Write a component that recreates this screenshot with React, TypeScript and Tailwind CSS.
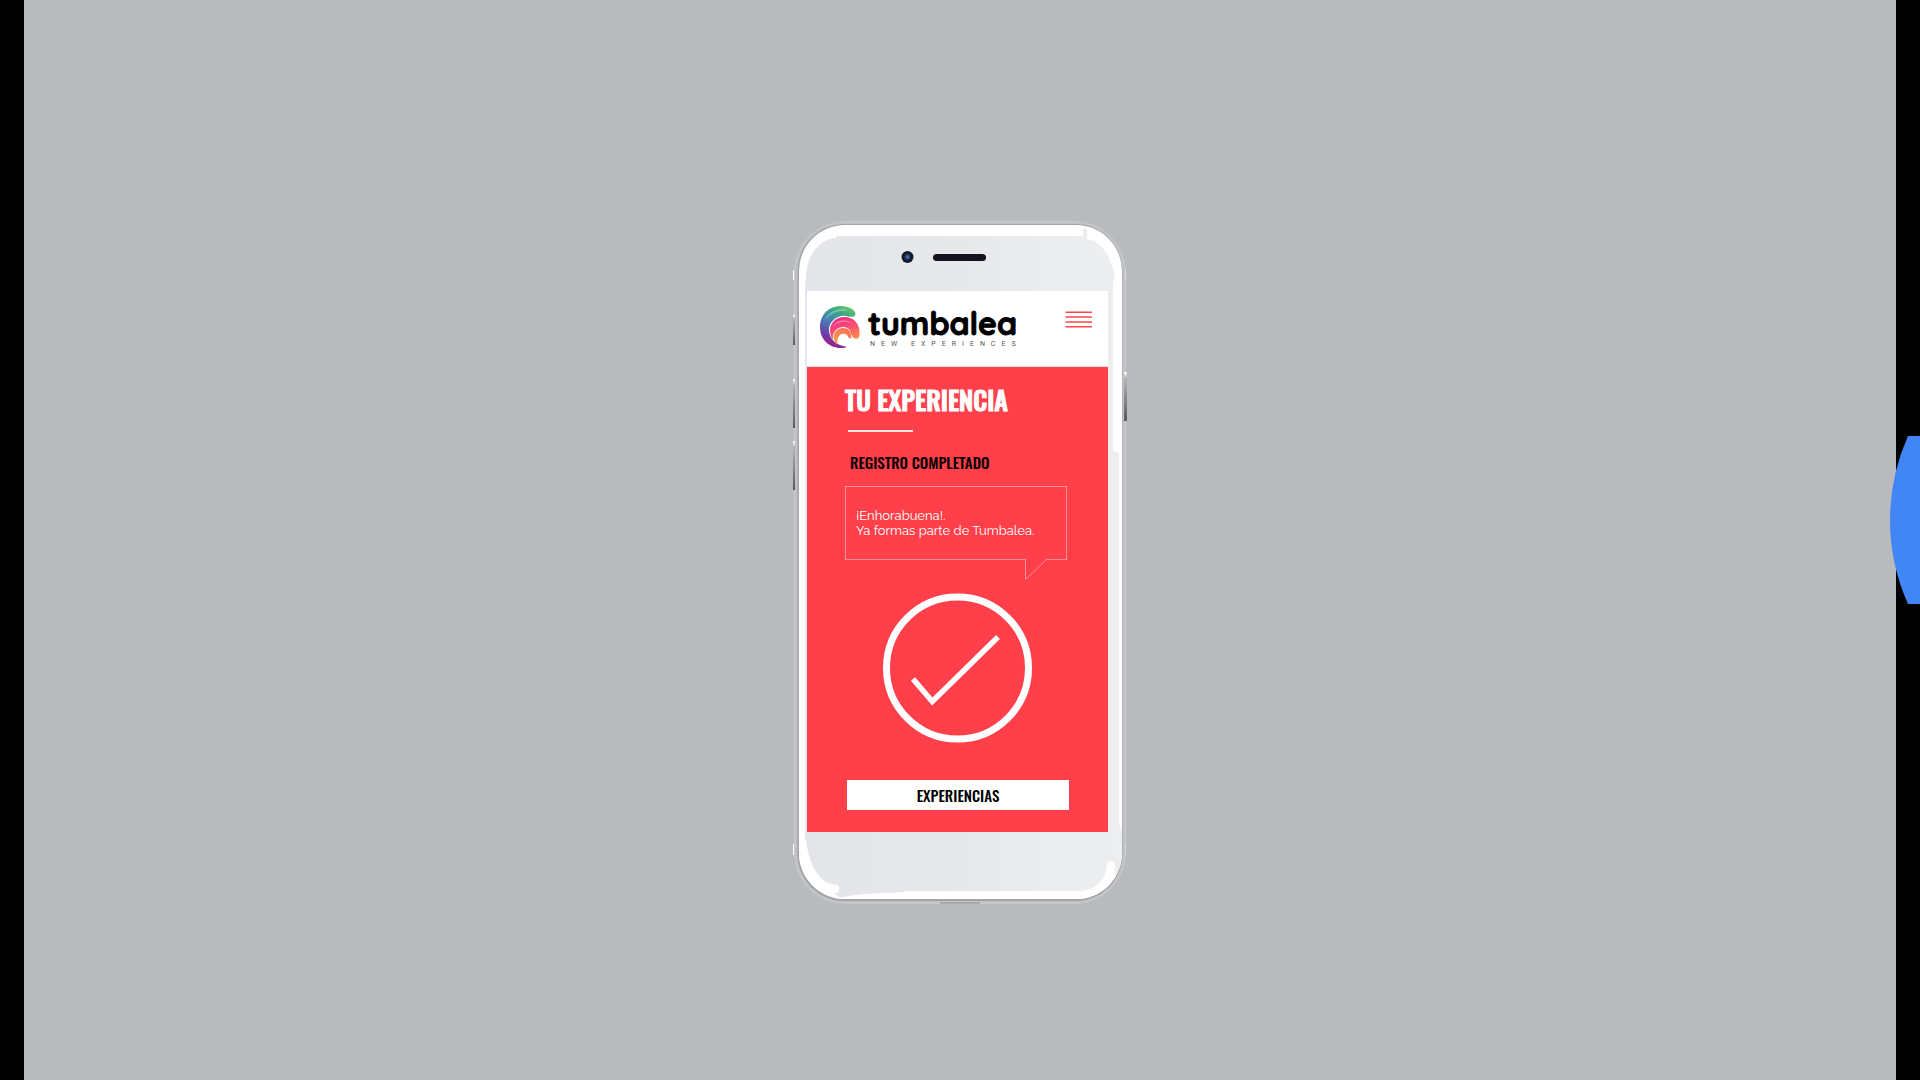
import React from "react";

function PhoneShell() {
  return (
    <svg
      className="absolute inset-0 h-full w-full overflow-visible"
      viewBox="0 0 332 683"
      preserveAspectRatio="none"
      aria-hidden="true"
    >
      <defs>
        <linearGradient id="glass" x1="0" y1="0" x2="1" y2="0">
          <stop offset="0" stopColor="#e3e5ea" />
          <stop offset="0.5" stopColor="#e7e8ea" />
          <stop offset="0.75" stopColor="#ebecee" />
          <stop offset="1" stopColor="#edeef0" />
        </linearGradient>
        <linearGradient id="key" x1="0" y1="0" x2="0" y2="1">
          <stop offset="0" stopColor="#ffffff" />
          <stop offset="0.12" stopColor="#b4b6b8" />
          <stop offset="1" stopColor="#56585a" />
        </linearGradient>
        <radialGradient id="lens">
          <stop offset="0" stopColor="#5d83bd" />
          <stop offset="0.35" stopColor="#23406f" />
          <stop offset="0.7" stopColor="#10131f" />
          <stop offset="1" stopColor="#23252e" />
        </radialGradient>
        <clipPath id="body">
          <rect x="5" y="4" width="323" height="674" rx="46" />
        </clipPath>
      </defs>
      <rect x="0.5" y="0.5" width="331" height="682" rx="51" fill="#bfc1c2" stroke="#c9cbcb" />
      <rect x="-1" y="94" width="2" height="30" fill="url(#key)" />
      <rect x="-1" y="158" width="2" height="49" fill="url(#key)" />
      <rect x="-1" y="220" width="2" height="49" fill="url(#key)" />
      <rect x="330" y="151" width="3" height="49" fill="url(#key)" />
      <rect x="-1" y="49" width="1" height="10" fill="#fff" />
      <rect x="-1" y="623" width="1" height="11" fill="#fff" />
      <rect x="331" y="49" width="1" height="10" fill="#d8d9da" />
      <rect x="331" y="623" width="1" height="11" fill="#d8d9da" />
      <rect x="3.5" y="3" width="325" height="677" rx="47" fill="#a2a4a8" />
      <g clipPath="url(#body)">
        <rect x="5" y="4" width="323" height="675" fill="#fff" />
        <path
          d="M12 58C12 32 28 17 42 17V15H289V8H293V18C308 20 321 40 321 62V100H325V600L328 612V678H50C28 668 12 650 12 620Z"
          fill="url(#glass)"
        />
        <path d="M12 60V622" stroke="#e3e7f3" strokeWidth="2" />
        <path d="M319 60H328V227a4 4 0 0 1-9 0Z" fill="#fff" />
        <path d="M8 622C11 648 24 668 41 668" fill="none" stroke="#fff" strokeWidth="9" strokeLinecap="round" />
        <path d="M5 622C7 652 26 674 50 678H5Z" fill="#fff" />
        <path d="M44 678C60 672 80 673 112 671V678Z" fill="#fff" />
        <path d="M113 674H286C305 673 316 660 317 644" fill="none" stroke="#fff" strokeWidth="8" strokeLinecap="round" />
        <path d="M286 679C310 677 326 660 320 648C315 662 305 671 286 674Z" fill="#fff" />
      </g>
      <path d="M146 682h40" stroke="#8e9093" />
      <circle cx="113.5" cy="36" r="6" fill="url(#lens)" />
      <rect x="139" y="33" width="53" height="7" rx="3.5" fill="#14131d" />
    </svg>
  );
}

function Swirl() {
  return (
    <svg width="40" height="42" viewBox="120 287 120 126" aria-hidden="true">
      <defs>
        <linearGradient id="wave1" x1="0.8" y1="0" x2="0.4" y2="1">
          <stop offset="0" stopColor="#68c860" />
          <stop offset="0.25" stopColor="#35a58c" />
          <stop offset="0.5" stopColor="#4a7cb8" />
          <stop offset="0.8" stopColor="#6a3fa5" />
          <stop offset="1" stopColor="#a01d8c" />
        </linearGradient>
        <linearGradient id="wave2" x1="0.2" y1="0" x2="0.7" y2="1">
          <stop offset="0" stopColor="#e8278b" />
          <stop offset="0.5" stopColor="#fb4d73" />
          <stop offset="1" stopColor="#fb8b4b" />
        </linearGradient>
        <linearGradient id="wave3" x1="0" y1="1" x2="1" y2="0">
          <stop offset="0" stopColor="#fba14c" />
          <stop offset="1" stopColor="#fb6a58" />
        </linearGradient>
      </defs>
      <path
        d="M226 313C229 300 207 287 182 287C145 287 120 315 120 350C120 387 147 413 182 413C190 413 196 412 200 409C168 405 147 385 147 358C147 334 168 317 192 316C205 318 222 324 226 313Z"
        fill="url(#wave1)"
      />
      <path d="M134 330C145 302 178 290 208 301C180 299 152 308 134 330Z" fill="#fff" opacity="0.3" />
      <path
        d="M238 378C243 345 225 320 193 320C165 320 150 340 150 360C150 372 153 382 159 390C156 366 170 350 190 350C205 350 212 362 215 375C220 388 236 388 238 378Z"
        fill="url(#wave2)"
      />
      <path d="M157 349C170 326 198 325 214 338C192 332 172 336 157 349Z" fill="#fff" opacity="0.3" />
      <path
        d="M214 380C214 362 203 353 189 353C172 353 161 366 161 380C161 392 168 400 174 403C168 388 176 370 190 370C198 370 202 374 204 379C207 386 214 386 214 380Z"
        fill="url(#wave3)"
      />
    </svg>
  );
}

function Header() {
  return (
    <header className="flex h-[76px] items-start justify-between border-b border-[#dcdde2] bg-white pl-[13px] pr-4">
      <a href="#inicio" className="flex pt-[15px]" aria-label="tumbalea new experiences">
        <Swirl />
        <span className="ml-2 flex flex-col whitespace-nowrap">
          <span className="font-[Quicksand,sans-serif] text-[32px] font-bold leading-[34px] text-black [-webkit-text-stroke:1px_#000]">
            tumbalea
          </span>
          <span className="ml-[2px] font-[Roboto,sans-serif] text-[7px] leading-[8px] tracking-[6px] text-[#555]">
            NEW EXPERIENCES
          </span>
        </span>
      </a>
      <button type="button" aria-label="Menú" className="mt-5">
        <svg width="27" height="17" viewBox="0 0 27 17" stroke="#ff4650" strokeWidth="1.5">
          <path d="M0.5 1.2H27M0.5 6H27M0.5 11H27M0.5 15.8H27" />
        </svg>
      </button>
    </header>
  );
}

export default function App() {
  return (
    <div className="relative min-h-screen overflow-hidden bg-black px-6">
      <main className="flex min-h-screen items-center justify-center bg-[#b8babd] pt-[45px]">
        <section className="relative w-[332px] pb-[72px] pl-[13px] pr-[18px] pt-[70px]">
          <PhoneShell />
          <div className="relative">
            <Header />
            <div className="bg-[#ff3f4a] pb-[22px] pl-[38px] pr-[41px] pt-4">
              <h1 className="whitespace-nowrap font-[Oswald,sans-serif] text-[26px] font-medium leading-[34px] text-white [-webkit-text-stroke:1px_#fff]">
                TU EXPERIENCIA
              </h1>
              <hr className="ml-[3px] mt-[13px] w-[65px] border-t-2 border-[#ffe4e6]" />
              <h2 className="ml-[5px] mt-[21px] whitespace-nowrap font-[Oswald,sans-serif] text-[15px] font-medium leading-[18px] text-black">
                REGISTRO COMPLETADO
              </h2>
              <div className="relative mt-[15px] flex h-[74px] items-center border border-[#ff9096] px-[10px]">
                <p className="whitespace-nowrap font-[Raleway,Lato,sans-serif] text-[13px] leading-[15px] text-white">
                  ¡Enhorabuena!.
                  <br />
                  Ya formas parte de Tumbalea.
                </p>
                <svg
                  className="absolute -bottom-[21px] right-[18px]"
                  width="23"
                  height="21"
                  viewBox="0 0 23 21"
                  aria-hidden="true"
                >
                  <path d="M1 0H22L1.5 20Z" fill="#ff3f4a" />
                  <path d="M0.5 0V20.5L21.5 0.5H23" fill="none" stroke="#ff9096" />
                </svg>
              </div>
              <svg
                className="ml-[38px] mt-[33px]"
                width="149"
                height="150"
                viewBox="0 0 149 150"
                fill="none"
                stroke="#fff"
                role="img"
                aria-label="Completado"
              >
                <circle cx="74.5" cy="75" r="71" strokeWidth="7" />
                <path d="M30 86L49.3 108.5L115 44" strokeWidth="5.5" />
              </svg>
              <button
                type="button"
                className="-mr-[2px] ml-[2px] mt-[37px] block h-[30px] w-full bg-white text-center font-[Oswald,sans-serif] text-[15px] font-medium leading-[30px] text-black"
              >
                EXPERIENCIAS
              </button>
            </div>
          </div>
        </section>
      </main>
      <button type="button" aria-label="Siguiente" className="absolute right-0 top-[436px]">
        <svg className="block" width="30" height="168" viewBox="0 0 30 168" fill="#4285f4" aria-hidden="true">
          <path d="M18 0A205 205 0 0 0 18 168H30V0Z" />
        </svg>
      </button>
    </div>
  );
}
